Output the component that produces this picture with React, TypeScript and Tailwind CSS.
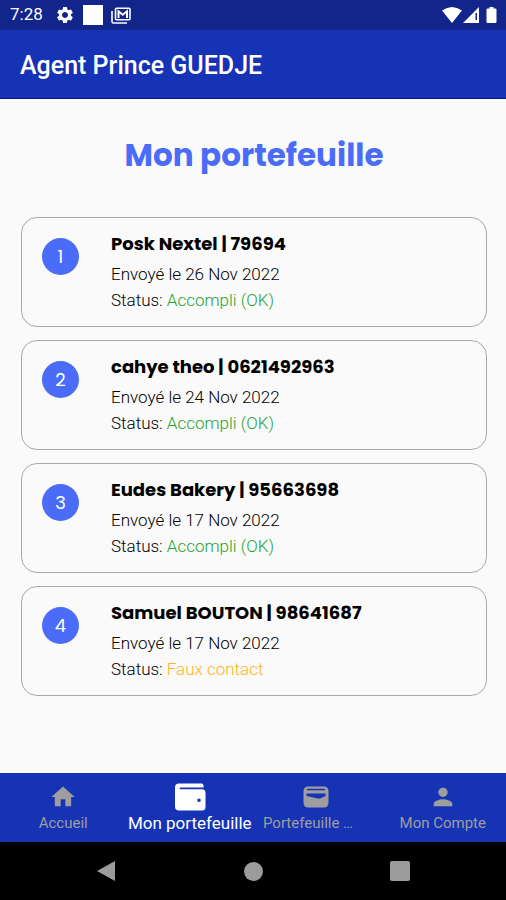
import { MdHome, MdPerson, MdSettings } from 'react-icons/md'

const contacts = [
  { id: 1, name: 'Posk Nextel', phone: '79694', date: '26 Nov 2022', status: 'Accompli (OK)', color: 'text-[#1fa32f]' },
  { id: 2, name: 'cahye theo', phone: '0621492963', date: '24 Nov 2022', status: 'Accompli (OK)', color: 'text-[#1fa32f]' },
  { id: 3, name: 'Eudes Bakery', phone: '95663698', date: '17 Nov 2022', status: 'Accompli (OK)', color: 'text-[#1fa32f]' },
  { id: 4, name: 'Samuel BOUTON', phone: '98641687', date: '17 Nov 2022', status: 'Faux contact', color: 'text-[#ffb31f]' },
]

function WalletIcon() {
  return (
    <svg viewBox="0 0 32 28" className="h-7 w-8" aria-hidden="true">
      <path
        fill="currentColor"
        fillRule="evenodd"
        d="M5 0.500h22.500a2 2 0 0 1 2 2v2H6.500a0.900 0.900 0 0 0 0 1.800h21.500a3.500 3.500 0 0 1 3.500 3.500V24a3.500 3.500 0 0 1-3.500 3.500h-23A4 4 0 0 1 1 23.500V4.500a4 4 0 0 1 4-4Zm20 15a1.800 1.800 0 1 0 0 3.600 1.800 1.800 0 0 0 0-3.600Z"
      />
    </svg>
  )
}

function CardWalletIcon() {
  return (
    <svg viewBox="0 0 26 22" className="h-[22px] w-[26px]" aria-hidden="true">
      <rect x="0.500" y="0.500" width="25" height="21" rx="4.500" fill="currentColor" />
      <path d="M3.500 4.200q0.300-1.400 1.800-1.400h15.400q1.500 0 1.800 1.400Z" fill="#1633b5" />
      <path d="M3.500 7.500h19v2.500l-5 2.200q-1.200 0.500-2.500 0.200L3.500 10Z" fill="#1633b5" />
    </svg>
  )
}

function MailStackIcon() {
  return (
    <svg viewBox="0 0 20 17" className="h-[17px] w-5" fill="none" stroke="currentColor" aria-hidden="true">
      <path d="M1 4v10.500q0 1.500 1.500 1.500H16" strokeWidth="1.600" />
      <rect x="4.500" y="1.300" width="14.500" height="11.500" rx="1" strokeWidth="1.600" />
      <path d="M7.500 11V4.300l4.250 3.500L16 4.300V11" strokeWidth="2" />
    </svg>
  )
}

function StatusBar() {
  return (
    <div className="flex h-[30px] items-center bg-[#11258a] pr-2 pl-2.5 text-white">
      <span className="text-[17px]">7:28</span>
      <MdSettings className="ml-3 size-5" />
      <span className="ml-2 size-5 bg-white" />
      <span className="ml-2">
        <MailStackIcon />
      </span>
      <svg viewBox="0 0 56 18" className="ml-auto h-[18px] w-14" fill="currentColor" aria-hidden="true">
        <path d="M0 4.500Q10 -2.500 20 4.500L10 17Z" />
        <path fillRule="evenodd" d="M37 1v16H21Zm-3.500 6v7H35V7Z" />
        <path d="M47.500 1h4v1.500h2q1 0 1 1V16q0 1-1 1h-8q-1 0-1-1V3.500q0-1 1-1h2Z" />
      </svg>
    </div>
  )
}

const tabs = [
  { label: 'Accueil', icon: <MdHome className="size-7" /> },
  { label: 'Mon portefeuille', icon: <WalletIcon />, active: true },
  { label: 'Portefeuille …', icon: <CardWalletIcon />, clipped: true },
  { label: 'Mon Compte', icon: <MdPerson className="size-7" /> },
]

export default function App() {
  return (
    <div className="flex min-h-screen flex-col bg-[#fafafa] font-['Roboto',sans-serif]">
      <StatusBar />
      <header className="border-b border-[#0a1295] bg-[#1633b5] px-5 pt-[18px] pb-3.5">
        <h1 className="text-[25px] leading-9 font-medium text-white">Agent Prince GUEDJE</h1>
      </header>

      <main className="flex-1 pt-9 pr-[19px] pl-[21px]">
        <h2 className="text-center font-['Poppins','Inter',sans-serif] text-[31px] leading-10 font-bold text-[#4a6cf8]">
          Mon portefeuille
        </h2>
        <ul className="mt-[42px] flex flex-col gap-[13px]">
          {contacts.map((c) => (
            <li key={c.id} className="flex rounded-2xl border border-[#a9a9a9] px-5 py-[13px]">
              <span className="mt-[7px] mr-8 flex size-[37px] shrink-0 items-center justify-center rounded-full bg-[#4a6cf8] font-['Poppins','Inter',sans-serif] text-lg text-white">
                {c.id}
              </span>
              <div className="text-[17px] leading-[26px] font-light text-black">
                <h3 className="mb-1 font-['Poppins','Inter',sans-serif] text-lg leading-[26px] font-bold">
                  {c.name} | {c.phone}
                </h3>
                <p>Envoyé le {c.date}</p>
                <p>
                  Status: <span className={c.color}>{c.status}</span>
                </p>
              </div>
            </li>
          ))}
        </ul>
      </main>

      <nav className="grid grid-cols-4 bg-[#1633b5] pt-2.5 pb-[7px]">
        {tabs.map((t) => (
          <a
            key={t.label}
            href="#"
            className={`flex flex-col items-center whitespace-nowrap ${t.active ? 'text-[17px] text-white' : 'text-[15px] text-[#9e9e9e]'}`}
          >
            <span className="flex h-7 items-center">{t.icon}</span>
            <span className={t.clipped ? 'w-full pl-2.5 leading-6' : 'leading-6'}>{t.label}</span>
          </a>
        ))}
      </nav>

      <div className="flex h-[58px] items-center justify-between bg-black px-24 text-[#9b9b9b]">
        <button aria-label="Retour">
          <svg viewBox="0 0 20 22" className="h-[22px] w-5" fill="currentColor">
            <path d="M19 1v20L1 11Z" />
          </svg>
        </button>
        <button aria-label="Accueil" className="size-[19px] rounded-full bg-current" />
        <button aria-label="Applications" className="size-5 rounded-xs bg-current" />
      </div>
    </div>
  )
}
